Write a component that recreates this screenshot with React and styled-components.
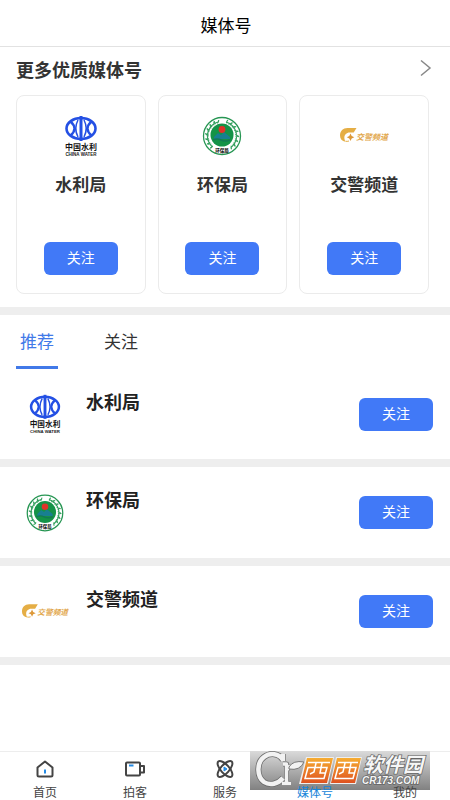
import React, { useState } from "react";
import styled, { createGlobalStyle } from "styled-components";

const GlobalStyle = createGlobalStyle`
  *, *::before, *::after { box-sizing: border-box; }
  body {
    margin: 0;
    background: #fff;
    color: #333;
    font-family: "Noto Sans CJK SC", "Noto Sans", sans-serif;
  }
  h1, h2, h3, p, ul { margin: 0; padding: 0; }
  button { font-family: inherit; cursor: pointer; }
`;

const Page = styled.div`
  display: flex;
  flex-direction: column;
  min-height: 100vh;
`;

const Header = styled.header`
  display: flex;
  align-items: center;
  justify-content: center;
  height: 47px;
  padding: 4px 0 0 2px;
  border-bottom: 1px solid #e2e2e2;
`;

const PageTitle = styled.h1`
  font-size: 17px;
  line-height: 24px;
  font-weight: 400;
  color: #000;
`;

const Main = styled.main`
  flex: 1;
`;

const Featured = styled.section`
  padding: 10px 21px 13px 16px;
  border-bottom: 8px solid #eee;
`;

const SectionHead = styled.div`
  display: flex;
  align-items: center;
  justify-content: space-between;
  height: 24px;
  margin-bottom: 14px;
`;

const SectionTitle = styled.h2`
  font-size: 18px;
  line-height: 24px;
  font-weight: 700;
`;

const MoreButton = styled.button`
  display: flex;
  width: 12px;
  height: 20px;
  padding: 0;
  margin-right: -3px;
  margin-bottom: 4px;
  border: 0;
  background: none;
`;

const CardGrid = styled.div`
  display: grid;
  grid-template-columns: repeat(3, 1fr);
  gap: 12px;
`;

const Card = styled.article`
  display: flex;
  flex-direction: column;
  align-items: center;
  height: 199px;
  padding: 15px 8px 18px;
  border: 1px solid #ebebeb;
  border-radius: 8px;
`;

const CardName = styled.h3`
  margin-top: 11px;
  font-size: 17px;
  line-height: 24px;
  font-weight: 700;
`;

const FollowButton = styled.button`
  width: 74px;
  height: 33px;
  margin-top: ${(p) => (p.$bottom ? "auto" : "0")};
  padding: 0 0 3px;
  border: 0;
  border-radius: 6px;
  background: #4179f7;
  color: #fff;
  font-size: 14px;
  line-height: 20px;
`;

const Tabs = styled.div`
  display: flex;
  gap: 42px;
  padding: 0 16px;
`;

const Tab = styled.button`
  width: 42px;
  height: 54px;
  padding: 0;
  border: 0;
  border-bottom: 3px solid ${(p) => (p.$active ? "#4179e8" : "transparent")};
  background: none;
  color: ${(p) => (p.$active ? "#4179e8" : "#333")};
  font-size: 17px;
  line-height: 24px;
  white-space: nowrap;
`;

const Row = styled.article`
  display: flex;
  align-items: center;
  height: ${(p) => (p.$first ? "98px" : "99px")};
  padding: 0 17px 0 21px;
  border-bottom: 8px solid #eee;
`;

const RowName = styled.h3`
  flex: 1;
  align-self: flex-start;
  margin: 20px 0 0 17px;
  font-size: 18px;
  line-height: 24px;
  font-weight: 700;
  color: #222;
`;

const LogoSvg = styled.svg`
  display: block;
  flex: none;
  width: ${(p) => p.$size}px;
  height: ${(p) => p.$size}px;
`;

const BottomBar = styled.nav`
  position: sticky;
  bottom: 0;
  border-top: 1px solid #ededed;
  background: #fff;
`;

const NavList = styled.ul`
  display: grid;
  grid-template-columns: repeat(5, 1fr);
  list-style: none;
`;

const NavLink = styled.a`
  display: flex;
  flex-direction: column;
  align-items: center;
  gap: 5px;
  height: 48px;
  padding-top: 7px;
  color: ${(p) => (p.$active ? "#1684d9" : "#444")};
  font-size: 12px;
  line-height: 16px;
  text-decoration: none;
`;

const NavIcon = styled.svg`
  display: block;
  width: 22px;
  height: 20px;
`;

const NavLabel = styled.span`
  position: relative;
  z-index: 2;
`;

const Watermark = styled.svg`
  position: absolute;
  z-index: 1;
  right: 20px;
  top: -1px;
  width: 180px;
  height: 39px;
  pointer-events: none;
`;

function WaterLogo({ size }) {
  return (
    <LogoSvg $size={size} viewBox="0 0 50 50" role="img" aria-label="中国水利">
      <ellipse cx="25" cy="17.5" rx="14.500" ry="10.500" fill="none" stroke="#2450e4" strokeWidth="2.600" />
      <path d="M25 5v25" stroke="#2450e4" strokeWidth="3" />
      <path d="M14.500 10.500q8 7 0 14M35.500 10.500q-8 7 0 14" fill="none" stroke="#2450e4" strokeWidth="2.400" />
      <path d="M22 9q-4.500 8.500 0 17M28 9q4.500 8.500 0 17" fill="none" stroke="#2450e4" strokeWidth="1.500" />
      <text x="25" y="39" textAnchor="middle" fontSize="8" fontWeight="700" fill="#151515">中国水利</text>
      <text x="25" y="44.500" textAnchor="middle" fontFamily="Liberation Sans, sans-serif" fontSize="4.500" fontWeight="700" fill="#222">CHINA WATER</text>
    </LogoSvg>
  );
}

const leafAngles = [-132, -114, -96, -78, -60, -42, -24, 24, 42, 60, 78, 96, 114, 132];

function EnvironmentLogo({ size }) {
  return (
    <LogoSvg $size={size} viewBox="0 0 50 50" role="img" aria-label="环保局">
      <circle cx="25" cy="25" r="18.500" fill="#fff" stroke="#279653" strokeWidth="1.300" />
      {leafAngles.map((a) => (
        <g key={a} transform={`rotate(${a} 25 25)`}>
          <path d="M24 11.500q-1-2 0-3.500M26 11.500q2-1 2.500-2.500M23 10.500h4" fill="none" stroke="#35a05f" strokeWidth="1.200" />
        </g>
      ))}
      <circle cx="25" cy="24" r="11.500" fill="#149347" />
      <path d="M17 26l4-4 3 2 3-3 6 5v2H17z" fill="#187f91" />
      <path d="M16 29q4-2 8 0t9 0" fill="none" stroke="#137a54" strokeWidth="1.500" />
      <circle cx="25" cy="18.500" r="3.400" fill="#df3328" />
      <text x="25" y="40.500" textAnchor="middle" fontSize="4.500" fontWeight="900" fill="#222">环保局</text>
    </LogoSvg>
  );
}

function TrafficLogo({ size }) {
  return (
    <LogoSvg $size={size} viewBox="0 0 50 50" role="img" aria-label="交警频道">
      <path d="M17.500 17H8.500C4 17 1 20 1 24.500c0 3.500 2 5.500 5.500 6.200C4.500 26.500 5 23 9.500 21.500h5.200z" fill="#e5ae45" />
      <path d="M6.500 30.200q1.500.5 3.500-.2" fill="none" stroke="#e5ae45" strokeWidth="1" />
      <path d="M11.500 22.500l1.200 2.500 2.600 1.200-2.600 1.200-1.200 2.600-1.200-2.600-2.500-1.200 2.500-1.200z" fill="#dd9939" />
      <text x="17" y="28.500" fontSize="8" fontWeight="700" fontStyle="italic" fill="#e2a74c">交警频道</text>
    </LogoSvg>
  );
}

const accounts = [
  { name: "水利局", Logo: WaterLogo },
  { name: "环保局", Logo: EnvironmentLogo },
  { name: "交警频道", Logo: TrafficLogo },
];

const icons = {
  home: (
    <>
      <path d="M3.500 8.500L11 2.500l7.500 6v7.500q0 1.500-1.500 1.500H5q-1.500 0-1.500-1.500z" />
      <path d="M11 10.500v4" stroke="#248be5" />
    </>
  ),
  camera: (
    <>
      <rect x="2" y="3.500" width="14" height="13" rx="1" />
      <path d="M16 7h4v6.500h-4" />
      <path d="M5 6.500h4.500" stroke="#248be5" />
    </>
  ),
  service: (
    <>
      <ellipse cx="11" cy="10" rx="10" ry="4.200" transform="rotate(48 11 10)" />
      <ellipse cx="11" cy="10" rx="10" ry="4.200" transform="rotate(-48 11 10)" />
      <path d="M10 8l3 2-3 2z" fill="#248be5" stroke="#248be5" strokeWidth="1" />
    </>
  ),
  media: <path d="M4 4h14v12H4zM7 8h8M7 12h5" />,
  user: <path d="M11 2a4 4 0 1 0 0 8 4 4 0 0 0 0-8M3 18q0-6 8-6t8 6" />,
};

const navItems = [
  { label: "首页", icon: "home" },
  { label: "拍客", icon: "camera" },
  { label: "服务", icon: "service" },
  { label: "媒体号", icon: "media", active: true },
  { label: "我的", icon: "user" },
];

const curve = "M33 9C29 2 20 1.500 14 6 6 12 7 26 14 31c6 4 14 2 19-4M33 3v7";
const stem = "M33 13h3.500v19M32 32.500h9M37 19q1-3 4-4";

function SiteMark() {
  return (
    <Watermark viewBox="0 0 180 39" role="img" aria-label="西西软件园 CR173.COM">
      <defs>
        <linearGradient id="plate" x2="0" y2="1">
          <stop stopColor="#dadada" />
          <stop offset="1" stopColor="#818181" />
        </linearGradient>
        <linearGradient id="orange" x2="0" y2="1">
          <stop stopColor="#f6ad32" />
          <stop offset="1" stopColor="#df5220" />
        </linearGradient>
      </defs>
      <path fill="url(#plate)" d="M0 0h180v39H0z" />
      <g fill="none" strokeLinejoin="round">
        <path d={curve} stroke="#6c6c6c" strokeWidth="6" />
        <path d={stem} stroke="#6c6c6c" strokeWidth="5" />
        <path d={curve} stroke="#f2f2f2" strokeWidth="4.500" />
        <path d={stem} stroke="#f2f2f2" strokeWidth="3.500" />
        <path d="M39 16q4-7 15-5-4 9-15 7z" fill="#f2f2f2" stroke="#777" strokeWidth="1" />
      </g>
      <path d="M56 6h28l-6 27H49zM86 6h26l-6 27H80z" fill="#eee" />
      <path d="M57 7h26l-6 25H51zM87 7h24l-6 25H81z" fill="url(#orange)" />
      <g fill="none" stroke="#fff" strokeWidth="1.500">
        <path d="M58 11.500h22M58 16.500h19l-3 11H55zM66 12l-2 9-4 2M72 12l-2 10h5" />
        <path d="M88 11.500h20M88 16.500h18l-3 11H85zM95 12l-2 9-4 2M101 12l-2 10h5" />
      </g>
      <g fill="#f6f6f6" stroke="#666" strokeWidth="1.500" paintOrder="stroke" fontWeight="700" fontStyle="italic">
        <text x="113" y="21" fontSize="20">软件园</text>
        <text x="112" y="33" fontSize="10" fontFamily="Liberation Sans, sans-serif">CR173.COM</text>
      </g>
    </Watermark>
  );
}

export default function App() {
  const [tab, setTab] = useState("推荐");
  return (
    <Page>
      <GlobalStyle />
      <Header>
        <PageTitle>媒体号</PageTitle>
      </Header>
      <Main>
        <Featured>
          <SectionHead>
            <SectionTitle>更多优质媒体号</SectionTitle>
            <MoreButton type="button" aria-label="更多">
              <svg width="12" height="20" viewBox="0 0 12 20" fill="none" stroke="#888" strokeWidth="1.500">
                <path d="M1 3.500l9 7.500-9 7.500" />
              </svg>
            </MoreButton>
          </SectionHead>
          <CardGrid>
            {accounts.map(({ name, Logo }) => (
              <Card key={name}>
                <Logo size={50} />
                <CardName>{name}</CardName>
                <FollowButton type="button" $bottom>关注</FollowButton>
              </Card>
            ))}
          </CardGrid>
        </Featured>
        <section>
          <Tabs role="tablist">
            {["推荐", "关注"].map((t) => (
              <Tab key={t} type="button" role="tab" aria-selected={tab === t} $active={tab === t} onClick={() => setTab(t)}>
                {t}
              </Tab>
            ))}
          </Tabs>
          {accounts.map(({ name, Logo }, i) => (
            <Row key={name} $first={i === 0}>
              <Logo size={48} />
              <RowName>{name}</RowName>
              <FollowButton type="button">关注</FollowButton>
            </Row>
          ))}
        </section>
      </Main>
      <BottomBar>
        <NavList>
          {navItems.map(({ label, icon, active }) => (
            <li key={label}>
              <NavLink href="#" $active={active} aria-current={active ? "page" : undefined}>
                <NavIcon viewBox="0 0 22 20" fill="none" stroke="#444" strokeWidth="2" strokeLinejoin="round" aria-hidden="true">
                  {icons[icon]}
                </NavIcon>
                <NavLabel>{label}</NavLabel>
              </NavLink>
            </li>
          ))}
        </NavList>
        <SiteMark />
      </BottomBar>
    </Page>
  );
}
